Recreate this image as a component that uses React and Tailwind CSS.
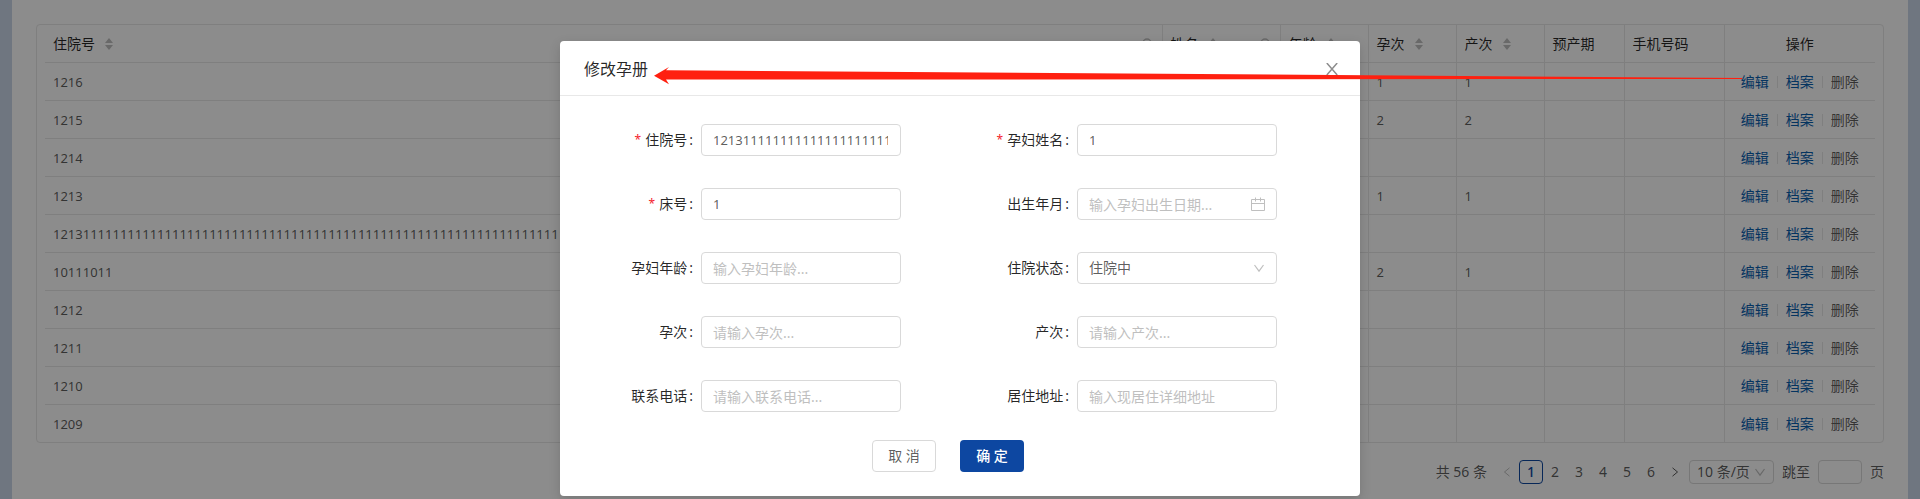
import { useState } from "react";

const LONG_NO = "1213" + "1".repeat(90);

const ROWS = [
  { no: "1216", g: "1", p: "1" },
  { no: "1215", g: "2", p: "2" },
  { no: "1214" },
  { no: "1213", g: "1", p: "1" },
  { no: LONG_NO },
  { no: "10111011", g: "2", p: "1" },
  { no: "1212" },
  { no: "1211" },
  { no: "1210" },
  { no: "1209" },
];

const COLUMNS = [
  { title: "住院号", sort: true, search: true },
  { title: "姓名", sort: true, search: true },
  { title: "年龄", sort: true },
  { title: "孕次", sort: true },
  { title: "产次", sort: true },
  { title: "预产期" },
  { title: "手机号码" },
];

function SortIcon() {
  return (
    <svg viewBox="0 0 8 14" className="h-3.5 w-2 fill-[#bfbfbf]" aria-hidden="true">
      <path d="M4 1 8 6H0z" />
      <path d="M4 13 0 8h8z" />
    </svg>
  );
}

function SearchIcon() {
  return (
    <svg viewBox="0 0 12 12" className="size-3 fill-none stroke-[#bfbfbf]" aria-hidden="true">
      <circle cx="5" cy="5" r="4" strokeWidth="1.4" />
      <path d="m8 8 3 3" strokeWidth="1.4" />
    </svg>
  );
}

function Chevron({ d, className }) {
  return (
    <svg viewBox="0 0 12 12" className={className} fill="none" stroke="currentColor" strokeWidth="1.2" aria-hidden="true">
      <path d={d} />
    </svg>
  );
}

const DOWN = "M1.5 3 6 9.2 10.5 3";

function PatientTable() {
  return (
    <div className="rounded border border-[#e8e8e8] px-2">
      <table className="w-full table-fixed border-collapse">
        <colgroup>
          <col />
          <col className="w-[118px]" />
          <col className="w-[88px]" />
          <col className="w-[88px]" />
          <col className="w-[88px]" />
          <col className="w-20" />
          <col className="w-[100px]" />
          <col className="w-[151px]" />
        </colgroup>
        <thead>
          <tr className="h-[37px] border-b border-[#e8e8e8]">
            {COLUMNS.map((c) => (
              <th key={c.title} className="border-r border-[#e8e8e8] px-2 pt-0.5 text-left font-normal text-black/85">
                <span className="flex items-center gap-2.5">
                  {c.title}
                  {c.sort && <SortIcon />}
                  {c.search && (
                    <span className="ml-auto">
                      <SearchIcon />
                    </span>
                  )}
                </span>
              </th>
            ))}
            <th className="pt-0.5 font-normal text-black/85">操作</th>
          </tr>
        </thead>
        <tbody>
          {ROWS.map((r) => (
            <tr key={r.no} className="h-[38px] border-b border-[#e8e8e8] last:border-b-0">
              {[r.no, "", "", r.g, r.p, "", ""].map((v, i) => (
                <td key={i} className="overflow-hidden border-r border-[#e8e8e8] px-2 pt-0.5 text-[13px] whitespace-nowrap">
                  {v}
                </td>
              ))}
              <td className="pt-0.5">
                <span className="flex items-center justify-center gap-2">
                  <a href="#edit" className="text-[#0960b0]">编辑</a>
                  <span className="h-3 w-px bg-[#e8e8e8]" />
                  <a href="#file" className="text-[#0960b0]">档案</a>
                  <span className="h-3 w-px bg-[#e8e8e8]" />
                  <a href="#delete">删除</a>
                </span>
              </td>
            </tr>
          ))}
        </tbody>
      </table>
    </div>
  );
}

function Pagination() {
  return (
    <nav aria-label="分页" className="mt-[17px] flex h-6 items-center justify-end">
      <span className="mr-2">共 56 条</span>
      <button type="button" aria-label="上一页" className="flex w-6 justify-center text-black/25">
        <Chevron d="M9 1 3 6l6 5" className="size-2.5" />
      </button>
      {["1", "2", "3", "4", "5", "6"].map((n) => (
        <button
          key={n}
          type="button"
          className={
            n === "1"
              ? "h-6 w-6 rounded border border-[#0d47a1] text-sm font-medium text-[#0d47a1]"
              : "h-6 w-6 text-sm"
          }
        >
          {n}
        </button>
      ))}
      <button type="button" aria-label="下一页" className="flex w-6 justify-center">
        <Chevron d="M3 1l6 5-6 5" className="size-2.5" />
      </button>
      <span className="relative ml-0.5 flex items-center">
        <select aria-label="每页条数" className="h-6 w-[85px] appearance-none rounded border border-[#d9d9d9] pl-[7px]">
          <option>10 条/页</option>
        </select>
        <Chevron d={DOWN} className="pointer-events-none absolute right-2 size-3 text-black/25" />
      </span>
      <label className="ml-2 flex items-center gap-2">
        跳至
        <input className="h-6 w-11 rounded border border-[#d9d9d9] px-1" />
        <span>页</span>
      </label>
    </nav>
  );
}

const FIELDS = [
  { id: "no", label: "住院号", required: true, value: LONG_NO },
  { id: "name", label: "孕妇姓名", required: true, value: "1" },
  { id: "bed", label: "床号", required: true, value: "1" },
  { id: "birth", label: "出生年月", hint: "输入孕妇出生日期...", icon: "calendar" },
  { id: "age", label: "孕妇年龄", hint: "输入孕妇年龄..." },
  { id: "state", label: "住院状态", options: ["住院中"] },
  { id: "gravidity", label: "孕次", hint: "请输入孕次..." },
  { id: "parity", label: "产次", hint: "请输入产次..." },
  { id: "phone", label: "联系电话", hint: "请输入联系电话..." },
  { id: "address", label: "居住地址", hint: "输入现居住详细地址" },
];

const CONTROL = "h-8 w-full rounded border border-[#d9d9d9] bg-white pl-[11px] pr-3 text-black/65 outline-none placeholder:text-[#bfbfbf]";

function Field({ field }) {
  const [value, setValue] = useState(field.value ?? "");
  return (
    <div className="flex items-center">
      <label htmlFor={field.id} className="flex w-[134px] items-center justify-end text-black/85">
        {field.required && <span className="mr-1 text-xs text-[#f5222d]">*</span>}
        {field.label}
        <span className="mr-2 ml-0.5">:</span>
      </label>
      <div className="relative flex w-[200px] items-center">
        {field.options ? (
          <select id={field.id} className={CONTROL + " appearance-none"}>
            {field.options.map((o) => (
              <option key={o}>{o}</option>
            ))}
          </select>
        ) : (
          <input
            id={field.id}
            value={value}
            placeholder={field.hint}
            onChange={(e) => setValue(e.target.value)}
            className={field.value ? CONTROL + " text-[13px]" : CONTROL}
          />
        )}
        {field.options && (
          <Chevron d={DOWN} className="pointer-events-none absolute right-3 size-3 text-black/25" />
        )}
        {field.icon && (
          <svg viewBox="0 0 14 14" className="pointer-events-none absolute right-3 size-3.5 fill-none stroke-[#bfbfbf]" aria-hidden="true">
            <path d="M.5 2.5h13v11H.5zM.5 6.5h13M4.5.5v4M9.5.5v4" />
          </svg>
        )}
      </div>
    </div>
  );
}

function EditDialog() {
  return (
    <form
      role="dialog"
      aria-labelledby="dialog-title"
      className="w-[800px] rounded bg-white shadow-[0_4px_12px_rgba(0,0,0,0.15)]"
      onSubmit={(e) => e.preventDefault()}
    >
      <header className="flex h-[55px] items-center justify-between border-b border-[#e8e8e8] pt-0.5 pr-[22px] pl-6">
        <h2 id="dialog-title" className="text-base text-black/85">修改孕册</h2>
        <button type="button" aria-label="关闭" className="text-black/45">
          <svg viewBox="0 0 12 12" className="size-3 fill-none stroke-current" aria-hidden="true">
            <path d="M.8 0 11.2 12M11.2 0 .8 12" strokeWidth="1.5" />
          </svg>
        </button>
      </header>
      <div className="grid grid-cols-2 gap-y-8 pt-7 pr-[41px] pl-[7px]">
        {FIELDS.map((f) => (
          <Field key={f.id} field={f} />
        ))}
      </div>
      <footer className="flex justify-center gap-6 pt-7 pr-6 pb-6">
        <button type="button" className="h-8 w-16 rounded border border-[#d9d9d9]">取 消</button>
        <button type="submit" className="h-8 w-16 rounded bg-[#0d47a1] font-medium text-white">确 定</button>
      </footer>
    </form>
  );
}

export default function App() {
  return (
    <div className="relative min-h-screen bg-[#cbd8ea] px-3 font-['Noto_Sans','Noto_Sans_CJK_SC',sans-serif] text-sm text-black/65">
      <main className="min-h-screen bg-white px-6 pt-6">
        <PatientTable />
        <Pagination />
      </main>
      <div className="absolute inset-0 flex items-start justify-center bg-black/45 pt-[41px]">
        <EditDialog />
      </div>
      <svg viewBox="0 0 1088 18" className="pointer-events-none absolute top-[67px] left-[654px] h-[18px] w-[1088px] fill-[#ff2010]" aria-hidden="true">
        <path d="M0 8.7 15 0 12 3.2 1088 11v1L12 12.6 15 17.3z" />
      </svg>
    </div>
  );
}
